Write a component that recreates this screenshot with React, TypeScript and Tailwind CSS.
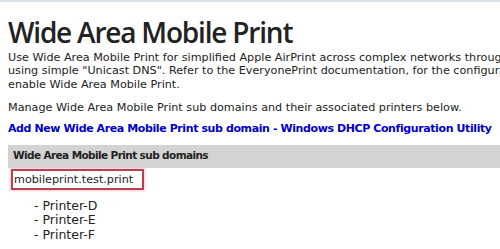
import React from 'react';

const printers = ['Printer-D', 'Printer-E', 'Printer-F'];

export default function App() {
    return (
        <div className="w-[500px] h-[249px] overflow-hidden bg-white border-t-2 border-[#dbe3e8] text-[#222] font-['DejaVu_Sans',Verdana,sans-serif]">
            <div className="w-[640px] pl-2">
                {/* Title */}
                <h1 className="pt-[13px] text-[28px] leading-[34px] font-semibold tracking-[-1.2px] whitespace-nowrap font-['Open_Sans',sans-serif]">
                    Wide Area Mobile Print
                </h1>

                {/* Intro */}
                <p className="mt-[2px] text-[11.2px] leading-[13.3px] whitespace-nowrap">
                    Use Wide Area Mobile Print for simplified Apple AirPrint across complex networks through
                    <br />
                    using simple "Unicast DNS". Refer to the EveryonePrint documentation, for the configuration steps required to
                    <br />
                    enable Wide Area Mobile Print.
                </p>

                <p className="mt-[10px] text-[11.2px] leading-[13.3px] whitespace-nowrap">
                    Manage Wide Area Mobile Print sub domains and their associated printers below.
                </p>

                <div className="mt-[8px] text-[11px] leading-[13.5px] font-bold tracking-[-0.4px] text-[#0000cc] whitespace-nowrap">
                    <a href="#">Add New Wide Area Mobile Print sub domain</a>
                    <span> - </span>
                    <a href="#">Windows DHCP Configuration Utility</a>
                </div>

                {/* Sub domains table */}
                <div className="mt-[9px]">
                    <div className="h-[23px] bg-[#d3d3d3] flex items-center px-[5px] text-[10.5px] font-bold tracking-[-0.6px]">
                        Wide Area Mobile Print sub domains
                    </div>
                    <div className="pl-[3px] pt-[1px]">
                        <div className="w-fit h-[21px] border-2 border-[#b8404f] shadow-[0_0_2px_1px_#f7c6d8] pl-[1px] pr-[9px] text-[11.2px] leading-[17px] whitespace-nowrap">
                            mobileprint.test.print
                        </div>
                        <ul className="mt-[9px] pl-[23px] text-[12.5px] leading-[14.5px]">
                            {printers.map((p) => (
                                <li key={p}>- {p}</li>
                            ))}
                        </ul>
                    </div>
                </div>
            </div>
        </div>
    );
}
